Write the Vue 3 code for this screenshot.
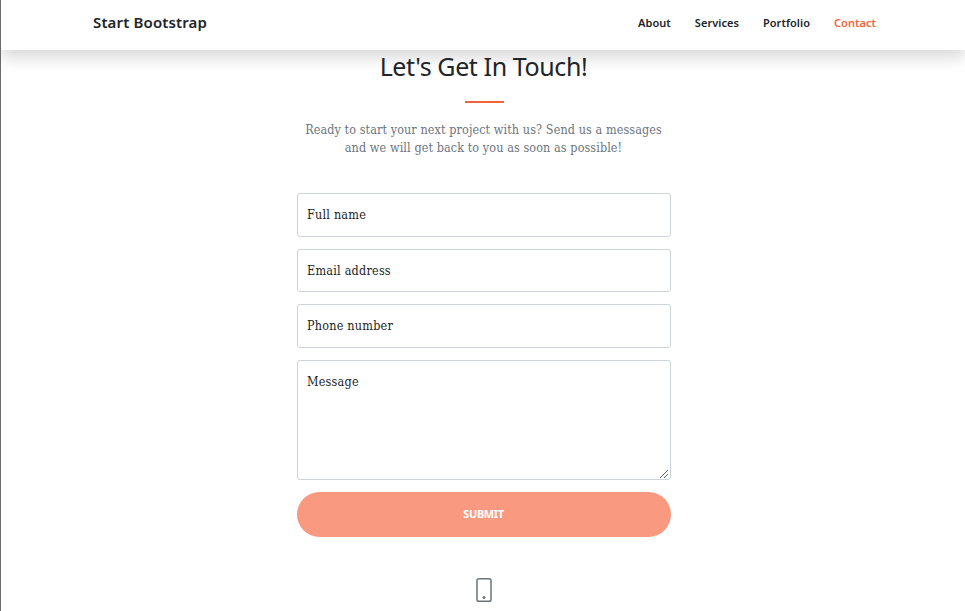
<script setup>
const links = ['About', 'Services', 'Portfolio', 'Contact']
const fields = ['Full name', 'Email address', 'Phone number']
</script>

<template>
  <div class="page">
    <nav class="navbar">
      <a class="brand">Start Bootstrap</a>
      <div class="links">
        <a v-for="link in links" :key="link" :class="['link', { active: link === 'Contact' }]">{{ link }}</a>
      </div>
    </nav>
    <main class="contact-section">
      <h2>Let's Get In Touch!</h2>
      <hr class="divider" />
      <p class="lead">Ready to start your next project with us? Send us a messages<br />and we will get back to you as soon as possible!</p>
      <form class="form" @submit.prevent>
        <label v-for="field in fields" :key="field" class="field"><span>{{ field }}</span></label>
        <label class="field message">
          <span>Message</span>
          <svg class="grip" width="9" height="9" viewBox="0 0 9 9" shape-rendering="crispEdges">
            <path d="M0 8h1v1H0zM1 7h1v1H1zM2 6h1v1H2zM3 5h1v1H3zM4 4h1v1H4zM5 3h1v1H5zM6 2h1v1H6zM7 1h1v1H7zM4 8h1v1H4zM5 7h1v1H5zM6 6h1v1H6zM7 5h1v1H7z" />
          </svg>
        </label>
        <button class="submit" type="submit">Submit</button>
      </form>
      <svg class="phone" width="16" height="24" viewBox="0 0 16 24">
        <rect x="1" y=".75" width="14" height="22.5" rx="1.8" />
        <circle cx="8" cy="19.5" r="1.5" />
      </svg>
    </main>
  </div>
</template>

<style>
body { background: #fff; overflow: hidden; }
</style>

<style scoped>
* { box-sizing: border-box; }
.page {
  height: 611px;
  overflow: hidden;
  border-left: 1px solid #6b6b6b;
  color: #212529;
  font-family: "Noto Sans", "Open Sans", sans-serif;
}
.navbar {
  position: relative;
  height: 50px;
  padding: 0 89px 6px 92px;
  display: flex;
  align-items: center;
  justify-content: space-between;
  background: #fff;
  box-shadow: 0 8px 16px rgba(0, 0, 0, .15);
}
.brand { font-size: 15px; font-weight: 600; letter-spacing: .14px; white-space: nowrap; }
.links { display: flex; gap: 24px; }
.link { font-size: 11px; font-weight: 600; letter-spacing: .04px; white-space: nowrap; }
.active { color: #f4623a; }
.contact-section {
  position: relative;
  display: flex;
  flex-direction: column;
  align-items: center;
  padding-left: 1px;
}
h2 { margin: 0; height: 51px; line-height: 32px; font-size: 25px; font-weight: 400; letter-spacing: -.4px; white-space: nowrap; }
.divider { position: relative; left: .5px; width: 39px; height: 2px; margin: 0; border: 0; background: #f4623a; }
.lead {
  margin: 18px 0 0;
  height: 72px;
  text-align: center;
  color: #6c757d;
  font: 12.5px/18px "DejaVu Serif Condensed", "DejaVu Serif", serif;
  letter-spacing: .09px;
  white-space: nowrap;
}
.form { width: 374px; display: flex; flex-direction: column; gap: 12px; }
.field {
  position: relative;
  height: 43.6px;
  padding: 12px 9.5px;
  border: 1px solid #ced4da;
  border-radius: 3px;
  font: 12.5px/18px "DejaVu Serif Condensed", "DejaVu Serif", serif;
  letter-spacing: .22px;
}
.message { height: 120px; }
.grip { position: absolute; right: 1px; bottom: 1px; fill: #666; }
.submit {
  height: 45px;
  padding: 0 0 2px;
  border: 0;
  border-radius: 23px;
  background: #f99a80;
  color: #fff;
  font: 700 11px/43px "Noto Sans", "Open Sans", sans-serif;
  letter-spacing: -.35px;
  text-transform: uppercase;
}
.phone { margin-top: 41px; fill: none; stroke: #6c757d; stroke-width: 1.5; }
.phone circle { fill: #6c757d; stroke: none; }
</style>
